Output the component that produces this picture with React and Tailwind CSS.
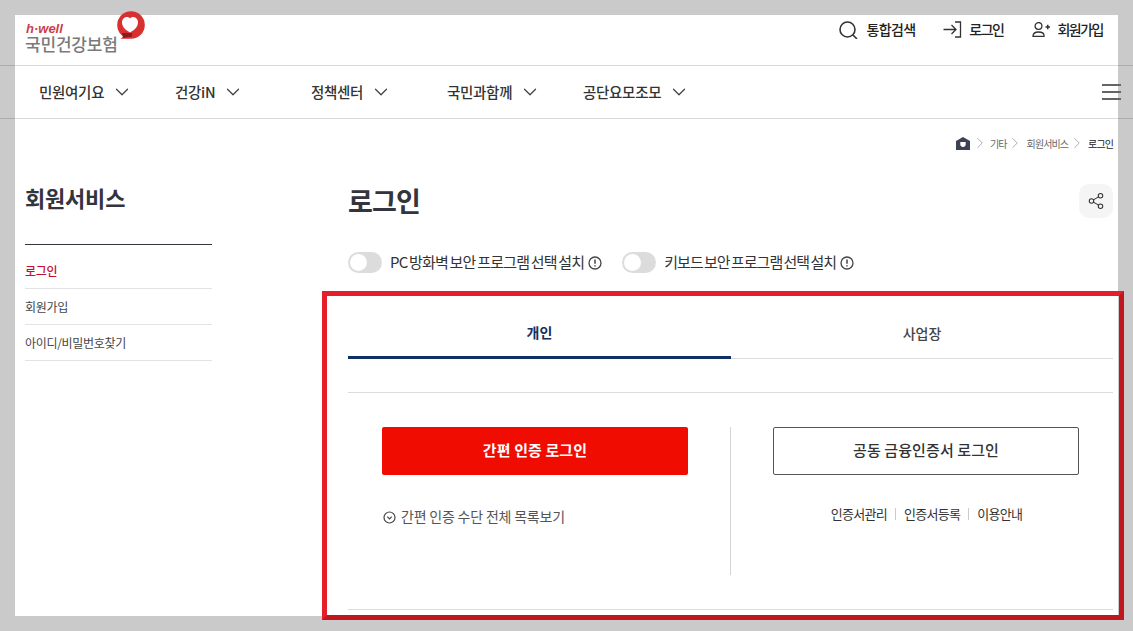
import { ChevronDown, ChevronRight, Share2 } from "lucide-react";

const font = { fontFamily: '"Noto Sans CJK KR", "Noto Sans", sans-serif' };

const navItems = ["민원여기요", "건강iN", "정책센터", "국민과함께", "공단요모조모"];

function Toggle() {
  return (
    <span className="flex h-[21px] w-[34px] items-center rounded-full bg-[#dcdcdc] pl-[2px]">
      <span className="h-[17px] w-[17px] rounded-full bg-white" />
    </span>
  );
}

function InfoIcon() {
  return (
    <svg width="14" height="14" viewBox="0 0 14 14" fill="none" stroke="#444" strokeWidth="1.3">
      <circle cx="7" cy="7" r="6" />
      <path d="M7 3.600v4.200M7 9.300v1.200" strokeWidth="1.500" />
    </svg>
  );
}

function Logo() {
  return (
    <div className="relative h-[38px] w-[125px]">
      <div className="pt-[7px] text-[13px] leading-[13px] font-bold italic text-[#c9404a]" style={{ fontFamily: '"Liberation Sans", sans-serif' }}>
        h·well
      </div>
      <div className="-ml-[1px] text-[17px] leading-[18px] font-medium tracking-[-0.200px] text-[#7a7a7a]">국민건강보험</div>
      <svg className="absolute left-[90px] top-[-4px]" width="30" height="30" viewBox="0 0 30 30">
        <path d="M4 27.500c2.500-.6 3.500-2 4-4l7-1 1 4c-3 1.500-8 1.500-12 1z" fill="#d8302f" />
        <circle cx="15" cy="14" r="13.800" fill="#d8302f" />
        <path d="M6 22h10v3.500L7 27z" fill="#8e1a20" />
        <path d="M14 21.500C8.500 18.500 6 15 6 11.500 6 8.200 8.400 6 11 6c1.300 0 2.300.5 3 1.500C14.700 6.500 15.700 6 17 6c2.600 0 5 2.200 5 5.500 0 3.500-2.500 7-8 10z" fill="#fff" />
      </svg>
    </div>
  );
}

export default function App() {
  return (
    <div className="relative h-[631px] w-[1133px] overflow-hidden bg-[#cacaca] pl-[15px] pr-[15px] pt-[15px]" style={font}>
      <div className="h-[601px] w-[1103px] bg-white">
        {/* top utility bar */}
        <div className="flex h-[50px] items-start justify-between pl-[11px] pr-[15px]">
          <Logo />
          <div className="flex items-center pt-[4px] text-[14px] font-medium text-[#222]">
            <svg className="mr-[9px]" width="19" height="18" viewBox="0 0 19 18" fill="none" stroke="#333" strokeWidth="1.600">
              <circle cx="8.500" cy="8.500" r="7.500" />
              <path d="M14 14l4 4" />
            </svg>
            <span className="mr-[28px] tracking-[-0.700px]">통합검색</span>
            <svg className="mr-[7px]" width="19" height="17" viewBox="0 0 19 17" fill="none" stroke="#333" strokeWidth="1.300">
              <path d="M.5 8.500H13M8.500 4l4.500 4.500L8.500 13M12 1h5.500v15H12" />
            </svg>
            <span className="mr-[29px] tracking-[-1.500px]">로그인</span>
            <svg className="mr-[7px]" width="18" height="15" viewBox="0 0 18 15" fill="none" stroke="#333" strokeWidth="1.300">
              <circle cx="6.500" cy="4" r="3.400" />
              <path d="M1 14.300c0-3 2.500-4.300 5.500-4.300s5.500 1.300 5.500 3.300v1z" />
              <path d="M13.500 5H18M15.750 2.750v4.500" strokeWidth="1.500" />
            </svg>
            <span className="tracking-[-1.500px]">회원가입</span>
          </div>
        </div>
        <div className="-mx-[15px] h-px bg-black/15" />

        {/* main nav */}
        <div className="relative flex h-[52px] items-center pb-[1px] pl-[24px] text-[14.500px] font-medium tracking-[-0.300px] text-[#333]">
          {navItems.map((item) => (
            <div key={item} className="flex w-[136px] items-center gap-[7px]">
              <span>{item}</span>
              <ChevronDown size={22} strokeWidth={1.400} className="text-[#444]" />
            </div>
          ))}
          <div className="absolute left-[1087px] top-[18px] flex w-[19px] flex-col gap-[5px]">
            <span className="h-[2px] bg-[#666]" />
            <span className="h-[2px] bg-[#666]" />
            <span className="h-[2px] bg-[#666]" />
          </div>
        </div>
        <div className="-mx-[15px] h-px bg-black/15" />

        {/* breadcrumb */}
        <div className="flex h-[50px] items-center justify-end pb-[2px] pr-[5px] text-[10px] tracking-[-0.900px] text-[#666]">
          <svg width="14" height="13" viewBox="0 0 14 13">
            <path d="M0 4l7-4 7 4v9H0z" fill="#3d4154" />
            <path d="M4.300 5h5.400v2.500c0 1.600-1.200 2.500-2.700 2.500s-2.700-.9-2.700-2.500z" fill="#fff" />
          </svg>
          <ChevronRight size={18} strokeWidth={0.800} className="ml-[1px] text-[#777]" />
          <span className="ml-[1px]">기타</span>
          <ChevronRight size={18} strokeWidth={0.800} className="-ml-[1px] text-[#777]" />
          <span className="ml-[3px]">회원서비스</span>
          <ChevronRight size={18} strokeWidth={0.800} className="text-[#777]" />
          <span className="ml-[2px] text-[#222]">로그인</span>
        </div>

        <div className="flex">
          {/* side menu */}
          <aside className="ml-[10px] w-[187px] shrink-0">
            <h2 className="pt-[13px] text-[22px] leading-[30px] font-bold tracking-[-0.200px] text-[#33343d]">회원서비스</h2>
            <div className="mt-[32px] border-t border-[#33343d] text-[12px] tracking-[-0.300px] text-[#444]">
              <div className="flex h-[44px] items-center border-b border-[#e3e3e3] pt-[8px] font-medium text-[#c8102e]">로그인</div>
              <div className="flex h-[36px] items-center border-b border-[#e3e3e3]">회원가입</div>
              <div className="flex h-[36px] items-center border-b border-[#e3e3e3]">아이디/비밀번호찾기</div>
            </div>
          </aside>

          {/* content */}
          <main className="ml-[136px] w-[765px]">
            <div className="flex items-center justify-between pt-[13px]">
              <h1 className="text-[27px] leading-[38px] font-bold tracking-[-0.800px] text-[#33343d]">로그인</h1>
              <div className="flex h-[34px] w-[34px] items-center justify-center rounded-[10px] bg-[#f5f5f5]">
                <Share2 size={18} strokeWidth={1.400} className="text-[#333]" />
              </div>
            </div>

            <div className="mt-[32px] flex h-[21px] items-center text-[15px] text-[#333] [word-spacing:-1px]">
              <Toggle />
              <span className="ml-[8px] mr-[4px] tracking-[-0.800px]">PC 방화벽 보안 프로그램 선택 설치</span>
              <InfoIcon />
              <span className="w-[20px]" />
              <Toggle />
              <span className="ml-[8px] mr-[4px] tracking-[-1px]">키보드 보안 프로그램 선택 설치</span>
              <InfoIcon />
            </div>

            {/* tabs */}
            <div className="mt-[20px] flex h-[66px] border-b border-[#dcdcdc] text-[14px] font-medium">
              <div className="-mb-px flex w-[383px] items-center justify-center border-b-[3px] border-[#0f3062] pt-[16px] font-bold text-[#16305f]">개인</div>
              <div className="flex flex-1 items-center justify-center pt-[16px] text-[#444]">사업장</div>
            </div>

            <div className="mt-[33px] border-t border-[#dcdcdc]" />

            <div className="flex h-[216px]">
              <div className="mt-[34px] h-[148px] w-[383px] border-r border-[#d5d5d5] pl-[34px]">
                <div className="flex h-[48px] w-[306px] items-center justify-center rounded-[2px] bg-[#f00c00] pb-[1px] text-[15px] font-bold tracking-[0.100px] text-white">간편 인증 로그인</div>
                <div className="mt-[31px] flex items-center gap-[5px] pl-[1px] text-[14px] tracking-[-0.200px] text-[#555]">
                  <svg className="mt-[2px]" width="13" height="13" viewBox="0 0 13 13" fill="none" stroke="#444" strokeWidth="1.200">
                    <circle cx="6.500" cy="6.500" r="5.500" />
                    <path d="M4.300 5.600l2.200 2.200 2.200-2.200" />
                  </svg>
                  <span>간편 인증 수단 전체 목록보기</span>
                </div>
              </div>
              <div className="flex-1 pl-[42px] pt-[34px]">
                <div className="flex h-[48px] w-[306px] items-center justify-center rounded-[2px] border border-[#555] pb-[1px] text-[15px] font-medium tracking-[0.100px] text-[#333]">공동 금융인증서 로그인</div>
                <div className="mt-[29px] flex items-center justify-center pr-[33px] text-[13px] tracking-[-0.700px] text-[#333]">
                  <span>인증서관리</span>
                  <span className="mx-[8px] h-[12px] w-px bg-[#ccc]" />
                  <span>인증서등록</span>
                  <span className="mx-[8px] h-[12px] w-px bg-[#ccc]" />
                  <span>이용안내</span>
                </div>
              </div>
            </div>
            <div className="border-t border-[#dcdcdc]" />
          </main>
        </div>
      </div>

      {/* red highlight frame, brighter on the top and left as in the capture */}
      <div className="absolute left-[322px] top-[291px] h-[329px] w-[802px] border-[5px] border-t-[#e31f2c] border-r-[#c2161f] border-b-[#c2161f] border-l-[#e31f2c]" />
    </div>
  );
}
